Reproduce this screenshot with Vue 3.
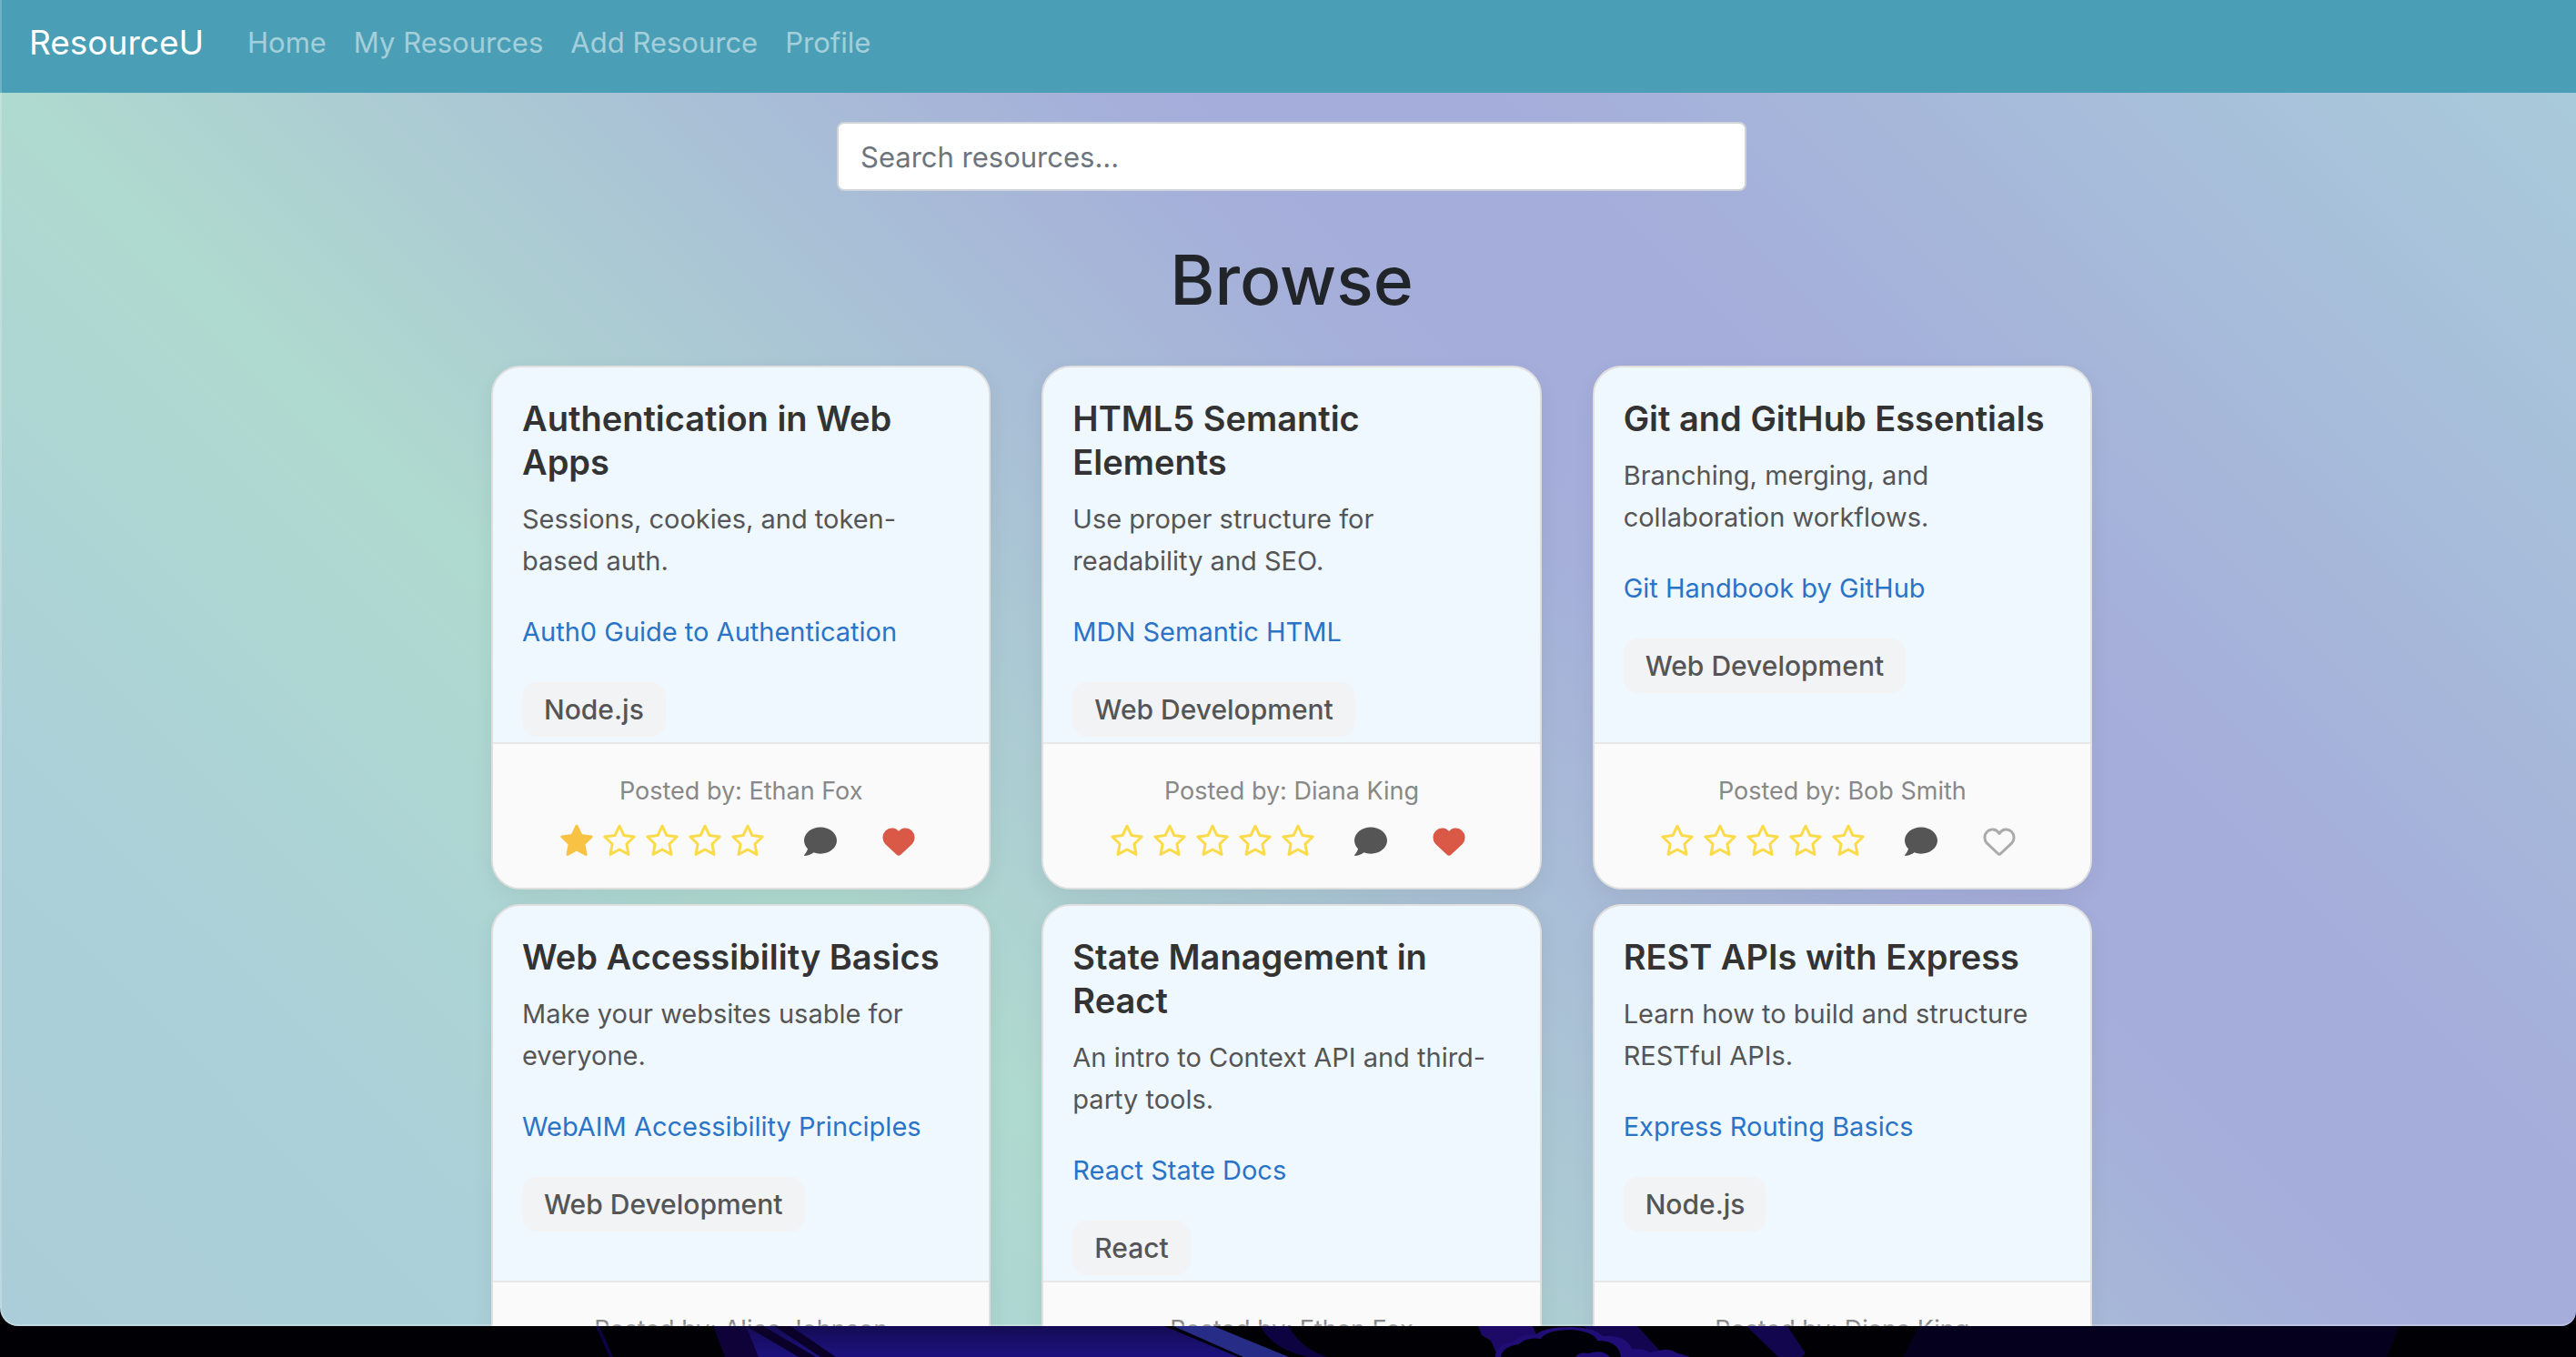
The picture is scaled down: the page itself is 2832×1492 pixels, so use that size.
<script setup>
import { ref } from 'vue'

const links = ['Home', 'My Resources', 'Add Resource', 'Profile']
const query = ref('')

const resources = ref([
  { title: 'Authentication in Web Apps', text: 'Sessions, cookies, and token-based auth.', link: 'Auth0 Guide to Authentication', tag: 'Node.js', author: 'Ethan Fox', rating: 1, liked: true },
  { title: 'HTML5 Semantic Elements', text: 'Use proper structure for readability and SEO.', link: 'MDN Semantic HTML', tag: 'Web Development', author: 'Diana King', rating: 0, liked: true },
  { title: 'Git and GitHub Essentials', text: 'Branching, merging, and collaboration workflows.', link: 'Git Handbook by GitHub', tag: 'Web Development', author: 'Bob Smith', rating: 0, liked: false },
  { title: 'Web Accessibility Basics', text: 'Make your websites usable for everyone.', link: 'WebAIM Accessibility Principles', tag: 'Web Development', author: 'Alice Johnson', rating: 0, liked: false },
  { title: 'State Management in React', text: 'An intro to Context API and third-party tools.', link: 'React State Docs', tag: 'React', author: 'Ethan Fox', rating: 0, liked: false },
  { title: 'REST APIs with Express', text: 'Learn how to build and structure RESTful APIs.', link: 'Express Routing Basics', tag: 'Node.js', author: 'Diana King', rating: 0, liked: false },
])
</script>

<template>
  <div class="desktop">
    <div class="window">
      <nav class="navbar">
        <a class="brand" href="#">ResourceU</a>
        <a v-for="l in links" :key="l" class="nav-link" href="#">{{ l }}</a>
      </nav>

      <main class="content">
        <input v-model="query" class="search" type="text" aria-label="Search resources" placeholder="Search resources..." />
        <h1 class="heading">Browse</h1>

        <div class="cards">
          <article v-for="r in resources" :key="r.title" class="card">
            <div class="body">
              <h2 class="title">{{ r.title }}</h2>
              <p class="text">{{ r.text }}</p>
              <a class="link" href="#">{{ r.link }}</a>
              <span class="tag">{{ r.tag }}</span>
            </div>
            <footer class="footer">
              <p class="author">Posted by: {{ r.author }}</p>
              <div class="actions">
                <div class="stars">
                  <button v-for="n in 5" :key="n" class="icon star" :class="{ on: n <= r.rating }" type="button" :aria-label="`Rate ${n}`" @click="r.rating = n">
                    <svg viewBox="0 0 36 36"><path d="M18 2.2 22.88 12.5 34.2 14 25.9 21.96 28 33.4 18 28 8 33.4 10.1 21.96 1.8 14 13.12 12.5Z" /></svg>
                  </button>
                </div>
                <button class="icon comment" type="button" aria-label="Comments">
                  <svg viewBox="0 -16 512 512"><path d="M256 32C114.6 32 0 125.1 0 240c0 49.6 21.4 95 57 130.7C44.5 421.1 2.7 466 2.2 466.5c-2.2 2.3-2.8 5.7-1.5 8.7S4.8 480 8 480c66.3 0 116-31.8 140.6-51.4 32.7 12.3 69 19.4 107.4 19.4 141.4 0 256-93.1 256-208S397.4 32 256 32z" /></svg>
                </button>
                <button class="icon heart" :class="{ on: r.liked }" type="button" aria-label="Favourite" @click="r.liked = !r.liked">
                  <svg viewBox="0 -4 36 36"><path d="M18 6.5C15 1.5 8.5.5 4.7 4.3 1 8 1 13.5 4.5 17.2L16.5 28.5Q18 30 19.5 28.5L31.5 17.2C35 13.5 35 8 31.3 4.3 27.5.5 21 1.5 18 6.5Z" /></svg>
                </button>
              </div>
            </footer>
          </article>
        </div>
      </main>
    </div>

    <svg class="wallpaper" viewBox="0 0 2832 34" preserveAspectRatio="none" aria-hidden="true">
      <defs>
        <linearGradient id="glow" x1="0" y1="0" x2="0" y2="1">
          <stop offset="0" stop-color="#140b55" />
          <stop offset="1" stop-color="#1d127e" />
        </linearGradient>
      </defs>
      <rect width="2832" height="34" fill="#000005" />
      <path d="M655 0h4l15 34h-4z" fill="#0e0342" />
      <path d="M784 0h36l16 34h-39z" fill="#0e0238" />
      <path d="M820 0h462l85 34H834z" fill="url(#glow)" />
      <path d="M820 0h19l58 34h-19zM851 0h18l50 34h-17z" fill="#0a0028" />
      <path d="M1280 0h10l77 34h-6z" fill="#02000c" />
      <path d="M1290 0h44l83 34h-50z" fill="#272c86" />
      <path d="M1386 0h31q12 24 42 34h-22q-40-10-51-34z" fill="#0c0340" />
      <path d="M1625 0h60l8 18-26 16h-20l-8-18-10-6z" fill="#1c0a66" />
      <path d="M1741 0h59l31 34h-50z" fill="#140550" />
      <path d="M1644 34q0-14 20-17 8-9 24-7 8-9 40-9 26 1 34 10 26-2 32 14 16 0 20 4 22-6 28 0l16 5z" fill="#200d75" />
      <path d="M1650 34q2-12 20-14 8-8 24-6 6-10 34-10 24 2 28 12 24 0 26 18z" fill="#000008" />
      <path d="M1732 34q4-6 14-4 16-5 24 4z" fill="#200d75" />
      <path d="M1920 0h45l20 30-4 4h-26z" fill="#12064f" />
      <path d="M2110 0h528l-14 34h-532z" fill="#04001d" />
    </svg>
  </div>
</template>

<style>
body {
  margin: 0;
  background: #000;
}
</style>

<style scoped>
.desktop {
  display: flex;
  flex-direction: column;
  height: 100vh;
  background: #000;
  overflow: hidden;
  font-family: Inter, "Noto Sans", sans-serif;
  font-size: 32px;
  color: #212529;
}

.window {
  position: relative;
  flex: 1;
  min-height: 0;
  overflow: hidden;
  border-radius: 0 0 16px 20px;
  background: linear-gradient(45deg, #abcdd9 0%, #abd0d8 15%, #afdacf 32%, #a5afda 60%, #a5addb 66%, #a5afda 72%, #a9cbda 98%);
}

/* light rim of the window frame */
.window::after {
  content: "";
  position: absolute;
  inset: 0;
  border-left: 2px solid rgba(255, 255, 255, 0.2);
  border-bottom: 2px solid rgba(255, 255, 255, 0.25);
  border-radius: inherit;
  pointer-events: none;
}

.navbar {
  display: flex;
  align-items: center;
  gap: 30px;
  box-sizing: border-box;
  height: 102px;
  padding: 0 32px 10px;
  background: #4a9fb6;
}

.brand {
  margin-right: 18px;
  font-size: 37px;
  color: #fff;
  text-decoration: none;
}

.nav-link {
  font-size: 31px;
  color: rgba(255, 255, 255, 0.5);
  text-decoration: none;
}

.content {
  display: flex;
  flex-direction: column;
  align-items: center;
  padding: 32px 0 0 8px;
}

.search {
  box-sizing: border-box;
  width: 1000px;
  max-width: 90%;
  height: 76px;
  padding: 0 24px;
  border: 2px solid #ced4da;
  border-radius: 8px;
  background: #fff;
  font: inherit;
  font-size: 31px;
  color: #212529;
}

.search::placeholder {
  color: #6c757d;
  opacity: 1;
}

.heading {
  margin: 50px 0 46px;
  font-size: 75px;
  line-height: 96px;
  font-weight: 500;
}

.cards {
  display: grid;
  grid-template-columns: repeat(3, 1fr);
  gap: 16px 56px;
  width: 1760px;
  max-width: 94%;
}

.card {
  display: flex;
  flex-direction: column;
  box-sizing: border-box;
  border: 2px solid #dfdfdf;
  border-radius: 32px;
  background: #f0f8ff;
  box-shadow: 0 8px 24px rgba(0, 0, 0, 0.06);
  overflow: hidden;
}

.body {
  display: flex;
  flex: 1;
  flex-direction: column;
  align-items: flex-start;
  padding: 32px 32px 6px;
}

.title {
  margin: 0 0 16px;
  font-size: 38px;
  line-height: 48px;
  font-weight: 600;
  color: #333;
}

.text {
  margin: 0 0 32px;
  font-size: 29px;
  line-height: 46px;
  color: #555;
}

.link {
  margin-bottom: 32px;
  font-size: 29px;
  line-height: 46px;
  color: #2a74c8;
  text-decoration: none;
}

.tag {
  padding: 0 24px;
  border-radius: 16px;
  background: #f2f3f5;
  font-size: 30px;
  line-height: 60px;
  font-weight: 500;
  color: #555;
}

.footer {
  box-sizing: border-box;
  height: 160px;
  padding-top: 32px;
  border-top: 2px solid #e8e8e8;
  background: #fafafa;
}

.author {
  margin: 0 0 16px;
  font-size: 27px;
  line-height: 40px;
  text-align: center;
  color: #888;
}

.actions {
  display: flex;
  justify-content: center;
  padding-right: 8px;
}

.stars {
  display: flex;
  gap: 11px;
  margin-right: 44px;
}

.icon {
  width: 36px;
  height: 36px;
  padding: 0;
  border: 0;
  background: none;
  cursor: pointer;
}

.icon svg {
  display: block;
  width: 36px;
  height: 36px;
}

.star path {
  fill: none;
  stroke: #fbdb49;
  stroke-width: 3;
  stroke-linejoin: round;
}

.star.on path {
  fill: #f8c344;
  stroke: #f8c344;
}

.comment {
  margin-right: 50px;
  fill: #555;
}

.heart path {
  fill: none;
  stroke: #aaa;
  stroke-width: 3;
  stroke-linejoin: round;
}

.heart.on path {
  fill: #d95846;
  stroke: #d95846;
}

.wallpaper {
  display: block;
  width: 100%;
  height: 34px;
}
</style>
